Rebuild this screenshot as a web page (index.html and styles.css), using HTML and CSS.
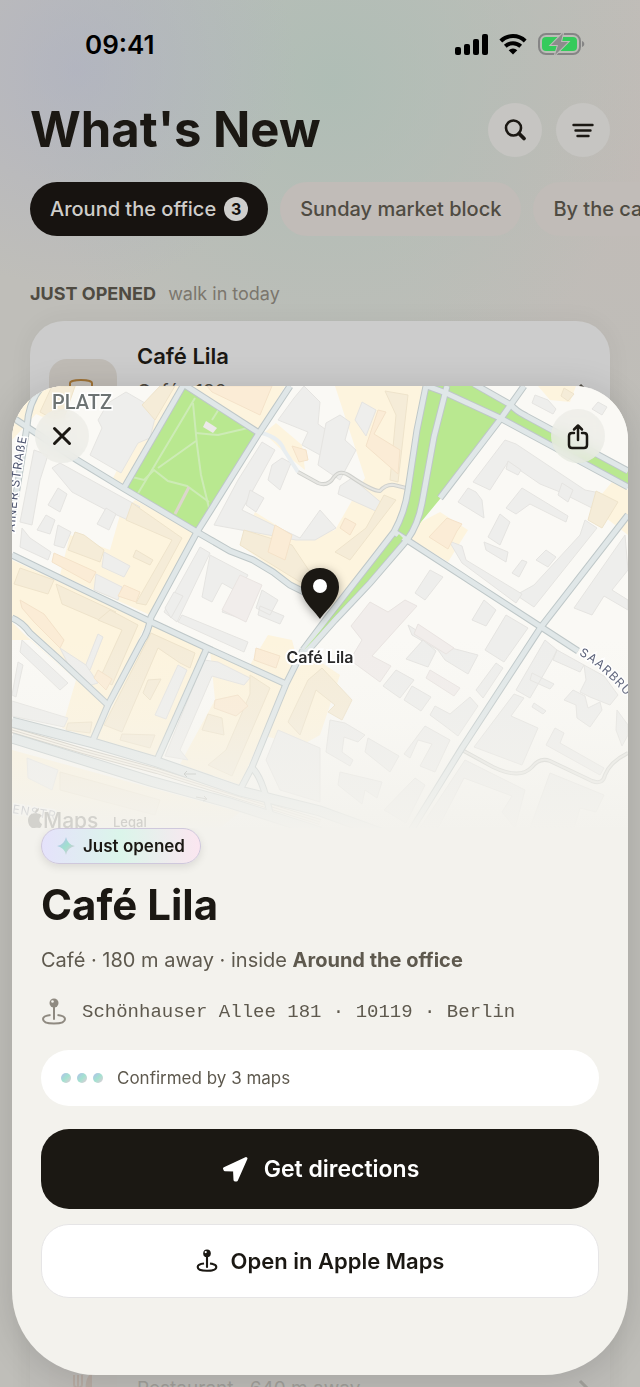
FILE: index.html
```html
<!DOCTYPE html>
<html lang="en">
<head>
    <meta charset="UTF-8">
    <meta name="viewport" content="width=device-width, initial-scale=1.0">
    <title>What's New</title>
    <link rel="stylesheet" href="styles.css">
</head>
<body>

    <div class="screen">
        <div class="status-bar">
            <span class="time">09:41</span>
            <div class="status-icons">
                <svg width="34" height="22" viewBox="0 0 34 22">
                    <rect x="1" y="14" width="6" height="8" rx="2"/>
                    <rect x="10" y="11" width="6" height="11" rx="2"/>
                    <rect x="19" y="6" width="6" height="16" rx="2"/>
                    <rect x="28" y="1" width="6" height="21" rx="2"/>
                </svg>
                <svg width="28" height="22" viewBox="0 0 28 22">
                    <path d="M14 21.5 L9.7 17.2 A6.3 6.3 0 0 1 18.3 17.2 Z"/>
                    <path d="M6.3 13.3 A11.2 11.2 0 0 1 21.7 13.3 M1.8 8 A17.5 17.5 0 0 1 26.2 8" fill="none" stroke="#000" stroke-width="4"/>
                </svg>
                <svg width="47" height="24" viewBox="0 0 47 24">
                    <rect x="1" y="2" width="41" height="20" rx="7" fill="none" stroke="#858585" stroke-width="2"/>
                    <path d="M44 9 C47 10 47 14 44 15 Z" fill="#858585"/>
                    <rect x="4" y="5" width="35" height="14" rx="4" fill="#34cb5b"/>
                    <path d="M25 1 L13 13 H20 L17 23 L30 10 H23 Z" fill="#8c8c8c" stroke="#bdbcb9" stroke-width="2" paint-order="stroke"/>
                </svg>
            </div>
        </div>

        <header class="header">
            <h1>What's New</h1>
            <button class="round-button" aria-label="Search">
                <svg width="24" height="24" viewBox="0 0 24 24" fill="none" stroke="#1b1813" stroke-linecap="round">
                    <circle cx="10.5" cy="10" r="7.5" stroke-width="2.6"/>
                    <path d="M16 15.5 L21 20.5" stroke-width="3.8"/>
                </svg>
            </button>
            <button class="round-button" aria-label="Filter">
                <svg width="24" height="24" viewBox="0 0 24 24" fill="none" stroke="#1b1813" stroke-width="2.4" stroke-linecap="round">
                    <path d="M2.5 7 H21.5 M4.5 12.5 H19.5 M6.5 18 H17.5"/>
                </svg>
            </button>
        </header>

        <nav class="tabs">
            <button class="tab active">Around the office <span class="count">3</span></button>
            <button class="tab">Sunday market block</button>
            <button class="tab">By the canal</button>
        </nav>

        <h2 class="section-title">JUST OPENED <span>walk in today</span></h2>

        <div class="places">
            <div class="place">
                <div class="thumb">
                    <svg width="36" height="36" viewBox="0 0 36 36" fill="none" stroke="#9d7136" stroke-width="2">
                        <path d="M5 8 C5 4 27 4 27 8 V18 C27 28 5 28 5 18 Z"/>
                    </svg>
                </div>
                <div class="place-text">
                    <h3>Café Lila</h3>
                    <p>Café · 180 m away</p>
                </div>
                <svg class="chevron" width="14" height="20" viewBox="0 0 14 20"><path d="M3 2 L11 10 L3 18"/></svg>
            </div>
            <div class="place faded">
                <div class="thumb">
                    <svg width="36" height="36" viewBox="0 0 36 36" fill="none" stroke="#a87e6d" stroke-width="2">
                        <path d="M9 4 V13 C9 18 17 18 17 13 V4 M13 4 V34"/>
                        <path d="M26 4 C22 7 21 14 22 20 H26 V34 Z" fill="#a87e6d"/>
                    </svg>
                </div>
                <div class="place-text">
                    <p>Restaurant · 640 m away</p>
                </div>
                <svg class="chevron" width="14" height="20" viewBox="0 0 14 20"><path d="M3 2 L11 10 L3 18"/></svg>
            </div>
        </div>
    </div>

    <section class="sheet" role="dialog" aria-labelledby="sheetTitle">
        <div class="map">
            <svg class="map-drawing" viewBox="12 386 616 442" preserveAspectRatio="xMidYMid slice">
                <defs>
                    <g id="roads">
                        <path d="M12 417 L27 427 L77 460 L123 488 L197 532 L230 551 L253 560 L273 572 L290 585 L320 600"/>
                        <path d="M42 386 Q28 403 27 427 L12 520"/>
                        <path d="M183 386 L124 488"/>
                        <path d="M183 384 L259 433"/>
                        <path d="M290 386 L259 433 L197 532 L151 617 Q148 633 142 641 L108 705 L93 740"/>
                        <path d="M12 555 L80 588 L149 621 L207 648 L286 684"/>
                        <path d="M12 618 Q22 622 30 633 L60 660 L108 705"/>
                        <path d="M207 648 L157 760"/>
                        <path d="M303 650 L286 684 L252 767 L240 790"/>
                        <path d="M252 768 Q262 776 270 813"/>
                        <path d="M426 386 L417 430 L408 490 Q405 512 394 532 L370 563 L327 618 L303 650"/>
                        <path d="M447 386 L434 437 L422 503 Q418 525 407 540 L370 583 L335 620 L303 656"/>
                        <path d="M427 386 L446 393 L500 418 L628 487"/>
                        <path d="M474 384 L511 405 Q516 411 526 416 L628 471"/>
                        <path d="M524 386 L502 417 L440 498"/>
                        <path d="M394 532 L407 540 L541 627 L578 651"/>
                        <path d="M628 515 L541 627 L462 748 L407 837"/>
                    </g>
                    <g id="avenues">
                        <path d="M12 722 L93 743 L157 762 L240 791 L320 811 L400 840"/>
                        <path d="M12 738 L83 760 L150 781 L230 803 L320 832"/>
                    </g>
                    <linearGradient id="fade" x1="0" y1="0" x2="0" y2="1">
                        <stop offset="0" stop-color="#f3f2ed" stop-opacity="0"/>
                        <stop offset="0.4" stop-color="#f3f2ed" stop-opacity="0.25"/>
                        <stop offset="0.75" stop-color="#f3f2ed" stop-opacity="0.65"/>
                        <stop offset="1" stop-color="#f3f2ed" stop-opacity="0.97"/>
                    </linearGradient>
                </defs>

                <rect x="12" y="386" width="616" height="442" fill="#faf9f5"/>

                <!-- shopping and residential blocks -->
                <g fill="#fdf4de">
                    <path d="M42 386 H76 L60 425 L36 414 L12 440 V414 Z"/>
                    <path d="M160 386 H182 L124 488 L112 480 Z"/>
                    <path d="M186 386 H285 L259 432 Z"/>
                    <path d="M264 433 L276 423 L302 445 L305 470 L290 458 Z"/>
                    <path d="M335 386 H425 L407 490 Q404 515 390 532 L330 610 L240 545 L255 512 L300 540 L335 530 L365 478 Z"/>
                    <path d="M135 500 L195 532 L150 615 L60 575 L70 535 L110 550 L120 515 Z"/>
                    <path d="M12 560 L147 622 L108 702 L12 620 Z"/>
                    <path d="M12 622 L24 634 L106 706 L92 738 L62 728 L76 680 L30 640 L12 640 Z"/>
                    <path d="M151 624 L205 650 L156 758 L96 740 Z"/>
                    <path d="M210 650 L284 685 L240 785 L180 764 L215 700 Z"/>
                    <path d="M268 635 L292 640 L296 655 L286 680 L250 665 Z"/>
                    <path d="M310 655 L340 675 L320 735 L302 745 L260 735 L288 680 Z"/>
                    <path d="M419 523 L440 512 L468 530 L448 562 L409 538 Z"/>
                    <path d="M612 482 L628 490 V535 L606 518 L590 508 Z"/>
                    <path d="M12 750 L240 812 L220 828 H12 Z"/>
                    <path d="M538 386 L576 386 L570 402 L550 400 Z"/>
                </g>

                <!-- parks -->
                <g fill="#b9e890">
                    <path d="M184 388 L257 433 L197 529 L126 487 Z"/>
                    <path d="M427 386 H476 L511 406 L526 416 L628 471 V487 L502 419 L440 499 L421 522 Q416 530 407 540 L370 582 L318 641 H306 L370 563 Q404 525 410 490 Z"/>
                </g>
                <g fill="none" stroke="#cdebb6" stroke-width="2">
                    <path d="M195 398 L152 470 L137 495 M193 403 L197 445 L201 475 L209 508 M219 409 L212 420"/>
                    <path d="M196 433 L218 435 L248 428 M196 441 L158 468 M132 477 L144 480 L154 470 L168 481 L187 486 L209 502"/>
                </g>
                <path d="M189 487 L175 514" stroke="#dcd6cc" stroke-width="3"/>
                <path d="M206 421 L217 428 L213 433 L203 427 Z" fill="#ece9e8"/>

                <!-- grey buildings -->
                <g fill="#eeeeec" stroke="#e5e4e1" stroke-width="1">
                    <path d="M108 403 L126 392 L157 410 L150 438 L138 443 L121 473 L90 455 L102 428 L98 420 Z"/>
                    <path d="M34 450 L48 455 L40 480 L32 525 L20 522 Z"/>
                    <path d="M52 468 L60 463 L140 507 L128 520 L108 511 L72 492 Z"/>
                    <path d="M22 528 L30 538 L51 552 L48 560 L20 547 Z"/>
                    <path d="M46 515 L55 520 L50 534 L37 530 Z M58 488 L67 494 L60 512 L48 505 Z"/>
                    <path d="M58 525 L71 532 L64 548 L54 545 Z M106 508 L116 514 L109 530 L97 524 Z"/>
                    <path d="M104 552 L130 566 L124 577 L102 567 Z M96 574 L122 587 L118 600 L94 590 Z"/>
                    <path d="M294 398 L304 386 L320 402 L318 424 L332 434 L320 455 L302 445 L308 432 L278 420 Z"/>
                    <path d="M262 442 L275 450 L242 510 L300 538 L320 510 L336 528 L315 540 L296 540 L214 525 L238 480 Z"/>
                    <path d="M272 465 L282 458 L291 463 L280 490 L268 480 Z M250 490 L264 498 L256 512 L246 505 Z"/>
                    <path d="M326 423 L340 415 L350 422 L345 440 L356 450 L340 480 L318 465 Z"/>
                    <path d="M355 420 L362 402 L376 410 L366 436 Z M340 486 L352 478 L384 505 L378 512 L338 494 Z"/>
                    <path d="M200 547 L210 553 L177 622 L164 612 Z"/>
                    <path d="M210 555 L248 575 L238 592 L222 583 L212 602 L202 597 Z M222 612 L236 590 L248 598 L245 620 Z"/>
                    <path d="M262 590 L278 600 L270 615 L256 608 Z M260 606 L284 616 L280 624 L258 615 Z"/>
                    <path d="M182 615 L248 642 L244 652 L178 622 Z M165 608 L174 592 L183 596 L171 618 Z"/>
                    <path d="M505 440 L516 444 L585 490 L600 493 L592 508 L560 492 L540 484 L508 462 L490 490 L473 482 Z"/>
                    <path d="M522 488 L568 516 L566 522 L530 504 L516 514 L506 508 Z M468 488 L476 492 L482 500 L484 518 L458 502 Z"/>
                    <path d="M508 461 L521 470 L518 475 L506 469 Z M500 514 L510 522 L500 545 L488 537 Z M562 483 L573 490 L568 502 L558 495 Z"/>
                    <path d="M585 520 L597 528 L534 607 L516 595 L534 585 L580 535 Z"/>
                    <path d="M449 541 L462 546 L466 560 L522 594 L516 603 L462 563 Z"/>
                    <path d="M484 542 L508 552 L506 562 L486 550 Z M546 550 L556 557 L548 567 L536 560 Z M522 560 L527 562 L519 577 L512 573 Z"/>
                    <path d="M625 535 L628 570 L612 590 L628 600 V610 L604 596 L592 615 L574 608 Z"/>
                    <path d="M535 395 L548 400 L556 409 L553 414 L532 403 Z M598 402 L607 407 L602 415 L592 409 Z"/>
                    <path d="M430 570 L443 577 L425 600 L415 593 Z M484 600 L496 610 L486 626 L472 620 Z"/>
                    <path d="M506 615 L528 628 L504 662 L485 650 Z M408 625 L440 645 L478 655 L468 674 L445 660 L438 650 L412 635 Z"/>
                    <path d="M423 640 L436 651 L428 667 L406 659 Z M396 670 L414 680 L400 698 L383 686 Z M412 686 L431 697 L421 711 L404 700 Z"/>
                    <path d="M545 640 L557 650 L552 660 L530 698 L516 690 Z M557 650 L584 665 L580 672 L553 660 Z M532 673 L554 684 L550 689 L530 680 Z"/>
                    <path d="M584 665 L604 676 L618 695 L610 705 L590 697 L580 692 L586 680 Z"/>
                    <path d="M573 690 L585 696 L588 708 L600 702 L602 710 L590 727 L577 718 L576 705 L564 700 Z M617 710 L628 725 V735 L622 746 L616 730 Z"/>
                    <path d="M514 694 L524 698 L511 716 L538 728 L522 765 L474 747 Z M534 703 L546 711 L543 714 L532 707 Z"/>
                    <path d="M496 663 L503 668 L483 698 L476 690 Z M470 697 L478 706 L458 736 L445 726 L430 715 L435 706 L450 714 Z"/>
                    <path d="M555 728 L564 733 L560 743 L604 768 L600 775 L546 745 Z"/>
                    <path d="M330 720 L345 723 L365 735 L358 742 L344 737 L342 752 L353 760 L350 766 L326 752 Z"/>
                    <path d="M368 738 L399 756 L390 772 L365 752 Z M425 726 L450 740 L435 772 L420 766 L432 744 L418 740 L410 758 L404 754 Z"/>
                    <path d="M340 772 L382 782 L377 798 L365 790 L362 804 L338 785 Z M415 778 L425 785 L406 823 L384 810 Z"/>
                    <path d="M465 760 L525 790 L515 828 L502 812 L512 796 L464 778 L438 828 H420 Z"/>
                    <path d="M550 773 L604 795 L596 812 L580 808 L574 828 H530 Z"/>
                    <path d="M22 640 L68 683 L60 690 L20 652 Z M18 662 L23 665 L16 697 L12 695 Z M98 634 L103 637 L90 670 L85 667 Z"/>
                    <path d="M12 701 L68 718 L64 727 L12 716 Z M60 648 L86 665 L98 683 L88 686 L68 664 Z"/>
                    <path d="M178 665 L187 670 L166 719 L155 715 Z M204 660 L218 662 L250 678 L244 685 L212 676 L180 750 L188 760 L165 756 Z"/>
                    <path d="M278 730 L320 748 V802 L280 790 L266 760 Z M27 758 L58 770 L52 790 L28 778 Z"/>
                </g>
                <g fill="#f1edeb" stroke="#e9e4e1" stroke-width="1">
                    <path d="M240 575 L262 585 L246 622 L222 610 Z"/>
                    <path d="M370 602 L388 612 L405 600 L417 606 L372 656 L391 666 L380 682 L350 660 L362 640 L351 626 Z"/>
                    <path d="M418 624 L454 648 L446 654 L414 634 Z M430 670 L460 688 L454 696 L426 678 Z"/>
                </g>

                <!-- tan and orange buildings -->
                <g fill="#f5ecd8" stroke="#eee3cb" stroke-width="1">
                    <path d="M52 386 H75 L62 424 L40 412 Z M160 386 H175 L155 420 L142 405 Z"/>
                    <path d="M132 503 L182 538 L146 605 L136 603 L172 540 L126 520 Z"/>
                    <path d="M20 568 L54 580 L48 594 L14 584 Z M56 584 L116 612 L104 622 L62 604 Z"/>
                    <path d="M75 532 L84 535 L104 550 L100 562 L68 550 Z M136 550 L153 560 L150 565 L133 557 Z"/>
                    <path d="M110 610 L138 625 L112 685 L100 678 L122 630 L98 620 Z"/>
                    <path d="M151 633 L195 653 L190 668 L180 663 L158 648 L122 732 L104 725 Z"/>
                    <path d="M148 680 L161 679 L150 700 L143 693 Z M122 734 L155 735 L150 748 L120 740 Z"/>
                    <path d="M250 675 L270 688 L232 776 L208 765 L226 750 L250 694 Z M208 714 L222 718 L224 735 L202 730 Z"/>
                    <path d="M68 723 L92 722 L90 733 L66 730 Z M385 391 L408 395 L398 482 L390 480 L396 415 Z"/>
                    <path d="M384 495 L396 500 L350 560 L335 552 L366 528 Z M308 680 L322 668 L352 700 L342 720 L328 712 L335 705 L316 690 L300 735 L288 722 Z"/>
                    <path d="M244 530 L292 545 L310 572 L300 582 L240 545 Z M596 491 L618 502 L602 528 L588 520 Z"/>
                    <path d="M60 772 L100 783 L160 800 L155 815 L60 790 Z M564 388 L574 394 L568 401 L561 396 Z"/>
                </g>
                <g fill="#fbecd6" stroke="#f4e2c9" stroke-width="1">
                    <path d="M207 386 H272 L260 415 L212 392 Z M292 446 L306 450 L308 460 L299 462 Z"/>
                    <path d="M378 410 L386 412 L374 434 L400 450 L398 474 L366 446 Z M345 518 L356 524 L350 535 L340 528 Z"/>
                    <path d="M447 518 L462 524 L457 531 L448 549 L429 537 Z M54 553 L96 572 L90 583 L52 562 Z"/>
                    <path d="M20 600 L44 614 L64 640 L60 648 L34 622 L22 608 Z M98 670 L112 679 L106 690 L94 678 Z"/>
                    <path d="M215 700 L238 695 L248 706 L236 716 L214 708 Z M256 648 L280 656 L276 668 L254 660 Z"/>
                    <path d="M275 525 L292 535 L285 560 L268 552 Z M124 585 L140 592 L136 602 L118 596 Z"/>
                </g>

                <!-- footpaths -->
                <path d="M262 433 Q280 438 284 450 L298 472" fill="none" stroke="#e9eef0" stroke-width="4"/>
                <g fill="none" stroke-linejoin="round">
                    <g stroke="#cfd0cc" stroke-width="4">
                        <path d="M298 472 L318 483 Q328 487 334 477 Q340 469 350 476 Q372 491 380 491 Q386 484 394 485 L406 488"/>
                        <path d="M462 750 L493 767 Q520 780 532 767 Q540 757 550 761 L592 781 Q603 785 605 775 Q610 762 628 753"/>
                    </g>
                    <g stroke="#e6e6e2" stroke-width="2">
                        <path d="M298 472 L318 483 Q328 487 334 477 Q340 469 350 476 Q372 491 380 491 Q386 484 394 485 L406 488"/>
                        <path d="M462 750 L493 767 Q520 780 532 767 Q540 757 550 761 L592 781 Q603 785 605 775 Q610 762 628 753"/>
                    </g>
                </g>

                <!-- railway between the two avenues -->
                <path d="M12 730 L83 751 L157 771 L240 797 L320 822" fill="none" stroke="#c9c5bc" stroke-width="6"/>
                <path d="M12 730 L83 751 L157 771 L240 797 L320 822" fill="none" stroke="#f6f2e8" stroke-width="4"/>
                <path d="M12 730 L83 751 L157 771 L240 797 L320 822" fill="none" stroke="#d5cfc6" stroke-width="1"/>

                <use href="#avenues" class="road-edge wide"/>
                <use href="#roads" class="road-edge"/>
                <use href="#avenues" class="road wide"/>
                <use href="#roads" class="road"/>
                <path d="M304 650 L328 622 L371 568 L399 534 L403 538 L368 580 L334 617 L309 645 Z" fill="#b9e890"/>
                <path d="M196 774 H184 M187 771 L184 774 L187 777 M196 797 L207 799 M204 796 L207 799 L203 801" fill="none" stroke="#a3a8a6" stroke-width="1"/>

                <path id="saar" d="M579 655 Q608 670 642 716" fill="none"/>
                <path id="ainer" d="M14 548 Q15 500 29 424" fill="none"/>
                <g class="street-name">
                    <text><textPath href="#saar">SAARBRÜC</textPath></text>
                    <text><textPath href="#ainer" startOffset="16">AINER STRAßE</textPath></text>
                    <text x="12" y="813" transform="rotate(9 12 813)">ENSTR</text>
                </g>
                <text class="district" x="52" y="409">PLATZ</text>

                <rect x="12" y="640" width="616" height="188" fill="url(#fade)"/>

                <g class="attribution">
                    <path d="M40 814 C36 813 29 812 28 820 C28 826 32 829 35 828 C38 827 39 829 41 827 L42 824 C38 822 39 817 42 816 Z M35 813 Q35 809 39 808 Q39 812 35 813 Z"/>
                    <text class="maps-name" x="43" y="828">Maps</text>
                    <text class="legal" x="113" y="827">Legal</text>
                </g>

                <g class="pin">
                    <path d="M320 619 C315 611 301 601 301 587 C301 575 310 568 320 568 C330 568 339 575 339 587 C339 601 325 611 320 619 Z"/>
                    <circle cx="320" cy="586" r="7" fill="#fff"/>
                </g>
                <text class="pin-name" x="320" y="663">Café Lila</text>
            </svg>
            <div class="map-buttons">
                <button class="round-button glass" aria-label="Close">
                    <svg width="24" height="24" viewBox="0 0 24 24" fill="none" stroke="#1b1813" stroke-width="3" stroke-linecap="round">
                        <path d="M4.5 4.5 L19.5 19.5 M19.5 4.5 L4.5 19.5"/>
                    </svg>
                </button>
                <button class="round-button glass" aria-label="Share">
                    <svg width="24" height="30" viewBox="0 0 24 30" fill="none" stroke="#1b1813" stroke-width="2.5" stroke-linecap="round" stroke-linejoin="round">
                        <path d="M8 12 H6 Q3 12 3 15 V24 Q3 27 6 27 H18 Q21 27 21 24 V15 Q21 12 18 12 H16 M12 19 V5 M8 8.500 L12 4.500 L16 8.500"/>
                    </svg>
                </button>
            </div>
        </div>

        <div class="details">
            <span class="badge">
                <svg width="18" height="18" viewBox="0 0 18 18">
                    <defs>
                        <linearGradient id="spark" x1="0" y1="0" x2="1" y2="1">
                            <stop offset="0.2" stop-color="#b5c5e8"/>
                            <stop offset="0.5" stop-color="#9fe0cf"/>
                            <stop offset="0.9" stop-color="#dfc6d4"/>
                        </linearGradient>
                    </defs>
                    <path d="M9 0 Q10.500 7.500 18 9 Q10.500 10.500 9 18 Q7.500 10.500 0 9 Q7.500 7.500 9 0 Z" fill="url(#spark)"/>
                </svg>
                Just opened
            </span>
            <h2 class="title" id="sheetTitle">Café Lila</h2>
            <p class="summary">Café · 180 m away · inside <strong>Around the office</strong></p>
            <p class="address">
                <svg width="26" height="28" viewBox="0 0 26 28" fill="none" stroke="#8f8a81" stroke-width="2">
                    <circle cx="13" cy="5" r="4.500" fill="#8f8a81" stroke="none"/>
                    <circle cx="11.500" cy="3.500" r="1.300" fill="#f3f2ed" stroke="none"/>
                    <path d="M13 8 V21" stroke-linecap="round"/>
                    <path d="M9.500 17 C5 17.500 2 19 2 21 C2 24 7 25.500 13 25.500 C19 25.500 24 24 24 21 C24 19 21 17.500 16.500 17"/>
                </svg>
                Schönhauser Allee 181 · 10119 · Berlin
            </p>
            <div class="confirmed">
                <span class="dots"><i></i><i></i><i></i></span>
                Confirmed by 3 maps
            </div>
            <button class="action primary">
                <svg width="28" height="28" viewBox="0 0 28 28" fill="#fff" stroke="#fff" stroke-width="3" stroke-linejoin="round">
                    <path d="M25 3.500 L3.500 13.500 L4 14.800 L13.500 15 L14 25 L15.500 25 Z"/>
                </svg>
                Get directions
            </button>
            <button class="action secondary">
                <svg width="22" height="24" viewBox="0 0 26 28" fill="none" stroke="#1b1813" stroke-width="2.500">
                    <circle cx="13" cy="5" r="4.500" fill="#1b1813" stroke="none"/>
                    <circle cx="11.500" cy="3.500" r="1.300" fill="#fff" stroke="none"/>
                    <path d="M13 8 V21" stroke-linecap="round"/>
                    <path d="M9.500 17 C5 17.500 2 19 2 21 C2 24 7 25.500 13 25.500 C19 25.500 24 24 24 21 C24 19 21 17.500 16.500 17"/>
                </svg>
                Open in Apple Maps
            </button>
        </div>
    </section>

</body>
</html>
```
FILE: styles.css
```css
/* Global Styles */
* {
    box-sizing: border-box;
}

body {
    font-family: Inter, "Liberation Sans", sans-serif;
    color: #1b1813;
    margin: 0;
}

h1, h2, h3, p {
    margin: 0;
}

button {
    font-family: inherit;
    color: inherit;
    border: none;
    padding: 0;
    cursor: pointer;
}

/* Page behind the sheet */
.screen {
    height: 100vh;
    overflow: hidden;
    display: flex;
    flex-direction: column;
    padding: 16px 30px 0;
    background:
        radial-gradient(circle at 12% 5%, rgba(172, 175, 196, 0.6), transparent 220px),
        radial-gradient(circle at 52% 6%, rgba(170, 189, 180, 0.75), transparent 320px),
        radial-gradient(circle at 100% 12%, rgba(194, 185, 181, 0.6), transparent 280px),
        #bfbeb9;
}

.status-bar {
    display: flex;
    align-items: center;
    justify-content: space-between;
    height: 56px;
    padding: 0 25px 0 55px;
    color: #000;
}

.time {
    font-size: 26px;
    font-weight: 600;
}

.status-icons {
    display: flex;
    align-items: center;
    gap: 11px;
}

.header {
    display: flex;
    align-items: center;
    gap: 14px;
    margin-top: 31px;
}

h1 {
    flex: 1;
    font-size: 49px;
    line-height: 54px;
    font-weight: 700;
}

.round-button {
    display: flex;
    align-items: center;
    justify-content: center;
    width: 54px;
    height: 54px;
    border-radius: 50%;
    background: #c6c5c2;
}

/* Tabs */
.tabs {
    display: flex;
    gap: 12px;
    margin: 25px -30px 0 0;
    overflow: hidden;
}

.tab {
    display: flex;
    flex: none;
    align-items: center;
    gap: 8px;
    height: 54px;
    padding: 0 20px;
    border-radius: 27px;
    background: #c1bcb8;
    color: #4f4b42;
    font-size: 20px;
    font-weight: 500;
}

.tab.active {
    background: #171310;
    color: #cfcdca;
}

.count {
    width: 24px;
    border-radius: 50%;
    background: #cfcecc;
    color: #171310;
    font-size: 16px;
    line-height: 24px;
    font-weight: 700;
}

.section-title {
    margin-top: 44px;
    font-size: 18px;
    line-height: 28px;
    color: #4f4b42;
}

.section-title span {
    margin-left: 8px;
    font-weight: 400;
    color: #7b766d;
}

/* Places list */
.places {
    flex: 1;
    display: flex;
    flex-direction: column;
    justify-content: space-between;
    margin: 13px 0 -56px;
    padding: 20px 19px;
    border-radius: 34px;
    background: linear-gradient(#cccccc 80px, #bdbcb8 400px);
    box-shadow: 0 0 24px rgba(0, 0, 0, 0.05);
}

.place {
    display: flex;
    gap: 20px;
}

.place.faded {
    opacity: 0.25;
}

.thumb {
    display: flex;
    align-items: center;
    justify-content: center;
    width: 68px;
    height: 68px;
    margin-top: 18px;
    border-radius: 18px;
    background: #bfbbb5;
}

.faded .thumb,
.faded .place-text {
    margin-top: 0;
}

.place-text {
    flex: 1;
}

.place h3 {
    font-size: 22px;
    line-height: 30px;
    font-weight: 600;
}

.place p {
    margin-top: 7px;
    font-size: 19px;
    line-height: 28px;
    color: #4f4b42;
}

.place.faded p {
    margin-top: 20px;
}

.chevron {
    align-self: flex-end;
    margin-bottom: 24px;
    fill: none;
    stroke: #4f4b42;
    stroke-width: 3;
}

/* Bottom sheet */
.sheet {
    position: fixed;
    left: 12px;
    right: 12px;
    bottom: 12px;
    overflow: hidden;
    border-radius: 54px 54px 84px 84px;
    background: #f3f2ed;
    box-shadow: 0 4px 36px rgba(0, 0, 0, 0.14);
}

.map {
    position: relative;
    height: 442px;
}

.map-drawing {
    display: block;
    width: 100%;
    height: 100%;
}

.road-edge {
    fill: none;
    stroke: #bec7c8;
    stroke-width: 7px;
}

.road {
    fill: none;
    stroke: #e0e7e8;
    stroke-width: 5px;
}

.road-edge.wide {
    stroke-width: 11px;
}

.road.wide {
    stroke-width: 9px;
}

.street-name {
    font-size: 12px;
    letter-spacing: 1px;
    fill: #4f5670;
    stroke: #fff;
    stroke-width: 3px;
    paint-order: stroke;
}

.district {
    font-family: Roboto, sans-serif;
    font-size: 20px;
    font-weight: 500;
    fill: #6d7373;
    stroke: #fff;
    stroke-width: 3px;
    paint-order: stroke;
}

.attribution {
    fill: #d3d2cd;
}

.maps-name {
    font-size: 21px;
    font-weight: 500;
}

.legal {
    font-size: 13px;
    font-weight: 500;
}

.pin {
    fill: #1b1813;
    filter: drop-shadow(0 2px 5px rgba(0, 0, 0, 0.35));
}

.pin-name {
    font-size: 16px;
    font-weight: 600;
    text-anchor: middle;
    fill: #2a2a2a;
    stroke: #fff;
    stroke-width: 4px;
    paint-order: stroke;
}

.map-buttons {
    position: absolute;
    top: 23px;
    left: 23px;
    right: 23px;
    display: flex;
    justify-content: space-between;
}

.glass {
    background: rgba(235, 235, 230, 0.7);
    backdrop-filter: blur(8px);
}

/* Sheet details */
.details {
    display: flex;
    flex-direction: column;
    padding: 0 29px 77px;
}

.badge {
    display: flex;
    align-self: flex-start;
    align-items: center;
    gap: 8px;
    height: 36px;
    padding: 0 15px;
    border: 1px solid #cfc8dc;
    border-radius: 18px;
    background: linear-gradient(90deg, #e5e2fb, #dbf5ea 50%, #fbe6f0);
    box-shadow: 0 3px 8px rgba(0, 0, 0, 0.1);
    font-size: 17px;
    font-weight: 600;
}

.title {
    margin-top: 16px;
    font-size: 42px;
    line-height: 50px;
    font-weight: 700;
}

.summary {
    margin-top: 16px;
    font-size: 20px;
    line-height: 28px;
    color: #5e594e;
}

.address {
    display: flex;
    align-items: center;
    gap: 15px;
    margin-top: 24px;
    font-family: "Liberation Mono", monospace;
    font-size: 19px;
    line-height: 28px;
    color: #5e594e;
}

.confirmed {
    display: flex;
    align-items: center;
    gap: 14px;
    height: 56px;
    margin-top: 24px;
    padding: 0 20px;
    border-radius: 28px;
    background: #fff;
    font-size: 17px;
    color: #5e594e;
}

.dots {
    display: flex;
    gap: 6px;
}

.dots i {
    width: 10px;
    height: 10px;
    border-radius: 50%;
    background: linear-gradient(135deg, #b3bdec, #a3e2d0 50%, #e6cbd8);
}

.action {
    display: flex;
    align-items: center;
    justify-content: center;
    font-weight: 600;
}

.action.primary {
    gap: 15px;
    height: 80px;
    margin-top: 23px;
    border-radius: 28px;
    background: #1b1813;
    color: #fff;
    font-size: 23px;
}

.action.secondary {
    gap: 13px;
    height: 74px;
    margin-top: 15px;
    border: 1px solid #e6e5e6;
    border-radius: 28px;
    background: #fff;
    font-size: 22px;
}
```
